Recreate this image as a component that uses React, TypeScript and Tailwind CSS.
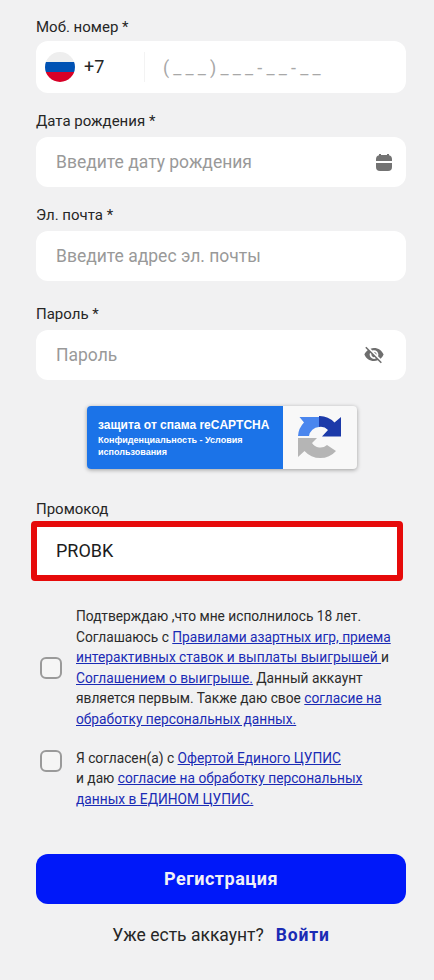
import React from "react";
import { IoMdEyeOff } from "react-icons/io";

function Label({ children, className = "" }: { children: React.ReactNode; className?: string }) {
  return <div className={`h-5 text-[15px] leading-5 text-[#262626] ${className}`}>{children}</div>;
}

function Field({ placeholder, icon }: { placeholder: string; icon?: React.ReactNode }) {
  return (
    <div className="mt-1.5 flex h-[50px] items-center justify-between rounded-xl bg-white pl-5 pr-[13px]">
      <span className="text-[17.5px] text-[#999999]">{placeholder}</span>
      {icon}
    </div>
  );
}

function Calendar() {
  return (
    <svg width="18" height="18" viewBox="0 0 18 18">
      <path d="M1 8V6a4 4 0 0 1 3-3.800V1h2v1h6V1h2v1.200A4 4 0 0 1 17 6v2z" fill="#737373" />
      <path d="M1 10h16v4a4 4 0 0 1-4 4H5a4 4 0 0 1-4-4z" fill="#737373" />
    </svg>
  );
}

function Recaptcha() {
  return (
    <svg width="44" height="44" viewBox="0 0 44 44">
      <path d="M21 0V11A10.500 10.500 0 0 0 11 20H0A21 21 0 0 1 6 6.500L1.500 1H21Z" fill="#4a86ee" />
      <path d="M21 0A21 21 0 0 1 36.500 6.500L43 1V20.500H24L30 14A10 10 0 0 0 21 11Z" fill="#1c3aa9" />
      <path d="M0 22H19L14 27A10 10 0 0 0 29 29L38 35A21 21 0 0 1 6.500 35L0 41Z" fill="#b5b5b5" />
    </svg>
  );
}

function Check() {
  return <div className="h-[22px] w-[22px] shrink-0 rounded-md border-2 border-[#9a9a9a] bg-[#f5f5f5]" />;
}

function A({ children }: { children: React.ReactNode }) {
  return <a className="text-[#1a2bb5] underline">{children}</a>;
}

export default function App() {
  return (
    <div
      className="h-[980px] w-[434px] overflow-hidden bg-[#f1f1f2] pl-9 pr-7 pt-[17px]"
      style={{ fontFamily: "Roboto, sans-serif" }}
    >
      <Label>Моб. номер *</Label>
      <div className="mt-1 flex h-[52px] items-center rounded-xl bg-white pl-[9px]">
        <div className="h-[30px] w-[30px] shrink-0 overflow-hidden rounded-full">
          <div className="h-[10px] bg-[#eeeeee]" />
          <div className="h-[10px] bg-[#0052b4]" />
          <div className="h-[10px] bg-[#d80027]" />
        </div>
        <span className="ml-[9px] w-[60px] text-lg text-[#262626]">+7</span>
        <div className="h-[30px] w-px bg-[#f3f3f3]" />
        <span className="ml-[18px] mt-0.5 text-lg tracking-[4.15px] text-[#a8a8a8]">(___)___-__-__</span>
      </div>

      <Label className="mt-[18px]">Дата рождения *</Label>
      <Field placeholder="Введите дату рождения" icon={<Calendar />} />

      <Label className="mt-[18px]">Эл. почта *</Label>
      <Field placeholder="Введите адрес эл. почты" />

      <Label className="mt-[23px]">Пароль *</Label>
      <Field placeholder="Пароль" icon={<IoMdEyeOff size={22} color="#6e6e6e" className="mr-2" />} />

      <div className="ml-[51px] mt-[26px] flex h-[63px] w-[270px] overflow-hidden rounded-sm bg-[#f8f8f8] shadow-[0_1px_4px_rgba(0,0,0,0.35)]">
        <div
          className="flex w-[196px] shrink-0 flex-col justify-center bg-[#1b73e8] pl-[11px] font-bold text-white"
          style={{ fontFamily: '"Liberation Sans", sans-serif' }}
        >
          <div className="text-[12px] leading-4">защита от спама reCAPTCHA</div>
          <div className="mt-[1px] text-[9px] leading-3">Конфиденциальность - Условия</div>
          <div className="text-[9px] leading-3">использования</div>
        </div>
        <div className="flex flex-1 items-center justify-center">
          <Recaptcha />
        </div>
      </div>

      <Label className="mt-[30px]">Промокод</Label>
      <div className="ml-[-5px] mt-0.5 flex h-[60px] w-[372px] items-center rounded-sm border-[6px] border-[#e60a0a] bg-white pl-[19px] text-lg text-[#1c1c1c]">
        PROBK
      </div>

      <div className="ml-1 mt-[25px] flex items-center gap-3.5 text-[13.75px] leading-[20.6px] text-[#2b2b2b]">
        <Check />
        <div className="w-[320px]">
          Подтверждаю ,что мне исполнилось 18 лет. Соглашаюсь с <A>Правилами азартных игр, приема интерактивных ставок и выплаты выигрышей </A>и{" "}
          <A>Соглашением о выигрыше.</A> Данный аккаунт является первым. Также даю свое <A>согласие на обработку персональных данных.</A>
        </div>
      </div>

      <div className="ml-1 mt-[18px] flex items-start gap-3.5 text-[13.75px] leading-[20.6px] text-[#2b2b2b]">
        <div className="mt-0.5">
          <Check />
        </div>
        <div className="w-[300px]">
          Я согласен(а) с <A>Офертой Единого ЦУПИС</A>
          <br />и даю <A>согласие на обработку персональных данных в ЕДИНОМ ЦУПИС.</A>
        </div>
      </div>

      <div className="mt-[45px] flex h-[50px] items-center justify-center rounded-xl bg-[#0018f9] text-lg font-bold tracking-[0.5px] text-[#f1f1f6]">
        Регистрация
      </div>

      <div className="mt-[21px] flex h-5 items-center justify-center text-[17.5px] text-[#262626]">
        <span>Уже есть аккаунт?</span>
        <span className="ml-3 font-bold tracking-[0.8px] text-[#1a2bb5]">Войти</span>
      </div>
    </div>
  );
}
